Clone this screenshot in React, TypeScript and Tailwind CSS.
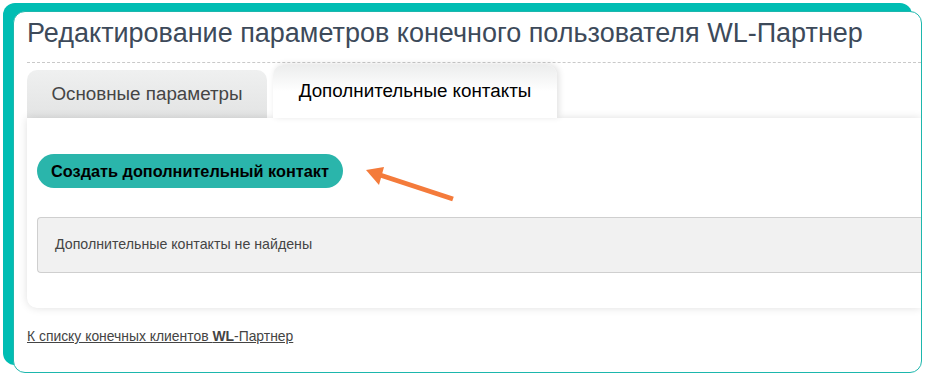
const App = () => {
  return (
    <div className="w-[928px] h-[377px] bg-white pl-[13px] pt-[11px] font-['Liberation_Sans',Arial,sans-serif]">
      <div className="w-[909px] h-[362px] rounded-[12px] border border-[#1db7ad] bg-white shadow-[-10px_-8px_0_0_#00bdb3] overflow-hidden pl-[13px]">
        <h1 className="pt-[3px] text-[27px] leading-[37px] text-[#3d4a5a] whitespace-nowrap">
          Редактирование параметров конечного пользователя WL-Партнер
        </h1>
        <div className="mt-[10px] border-b border-dashed border-[#c9c9c9]" />

        <div className="mt-[1px] flex items-end gap-[6px] h-[54px]">
          <div className="w-[240px] h-[48px] rounded-t-[10px] bg-gradient-to-b from-[#eff0f0] to-[#e3e4e4] flex items-center justify-center text-[18.8px] text-[#454545]">
            Основные параметры
          </div>
          <div className="relative z-10 w-[284px] h-[53px] rounded-t-[10px] bg-gradient-to-b from-[#eceded] via-white to-white shadow-[2px_-1px_6px_rgba(0,0,0,0.12)] flex items-center justify-center text-[18.8px] text-black">
            Дополнительные контакты
          </div>
        </div>

        <div className="relative h-[190px] rounded-bl-[10px] bg-white shadow-[0_0_8px_rgba(0,0,0,0.13)] pl-[10px] pt-[36px]">
          <button className="h-[34px] w-[306px] rounded-full bg-[#2ab5ab] text-[16.3px] font-bold text-black">
            Создать дополнительный контакт
          </button>
          <div className="mt-[29px] h-[56px] rounded-l-[4px] border border-r-0 border-[#cfcfcf] bg-[#f1f1f1] pl-[17px] flex items-center text-[14.2px] text-[#454545]">
            Дополнительные контакты не найдены
          </div>

          <svg className="absolute left-[330px] top-[40px]" width="110" height="50" viewBox="0 0 110 50">
            <line x1="96" y1="41" x2="20" y2="16" stroke="#f47b3b" strokeWidth="5" />
            <polygon points="9,12 27,9 22,27" fill="#f47b3b" />
          </svg>
        </div>

        <a href="#" className="mt-[19px] inline-block text-[13.9px] leading-[18px] text-[#444] underline">
          К списку конечных клиентов <b>WL</b>-Партнер
        </a>
      </div>
    </div>
  );
};

export default App;
